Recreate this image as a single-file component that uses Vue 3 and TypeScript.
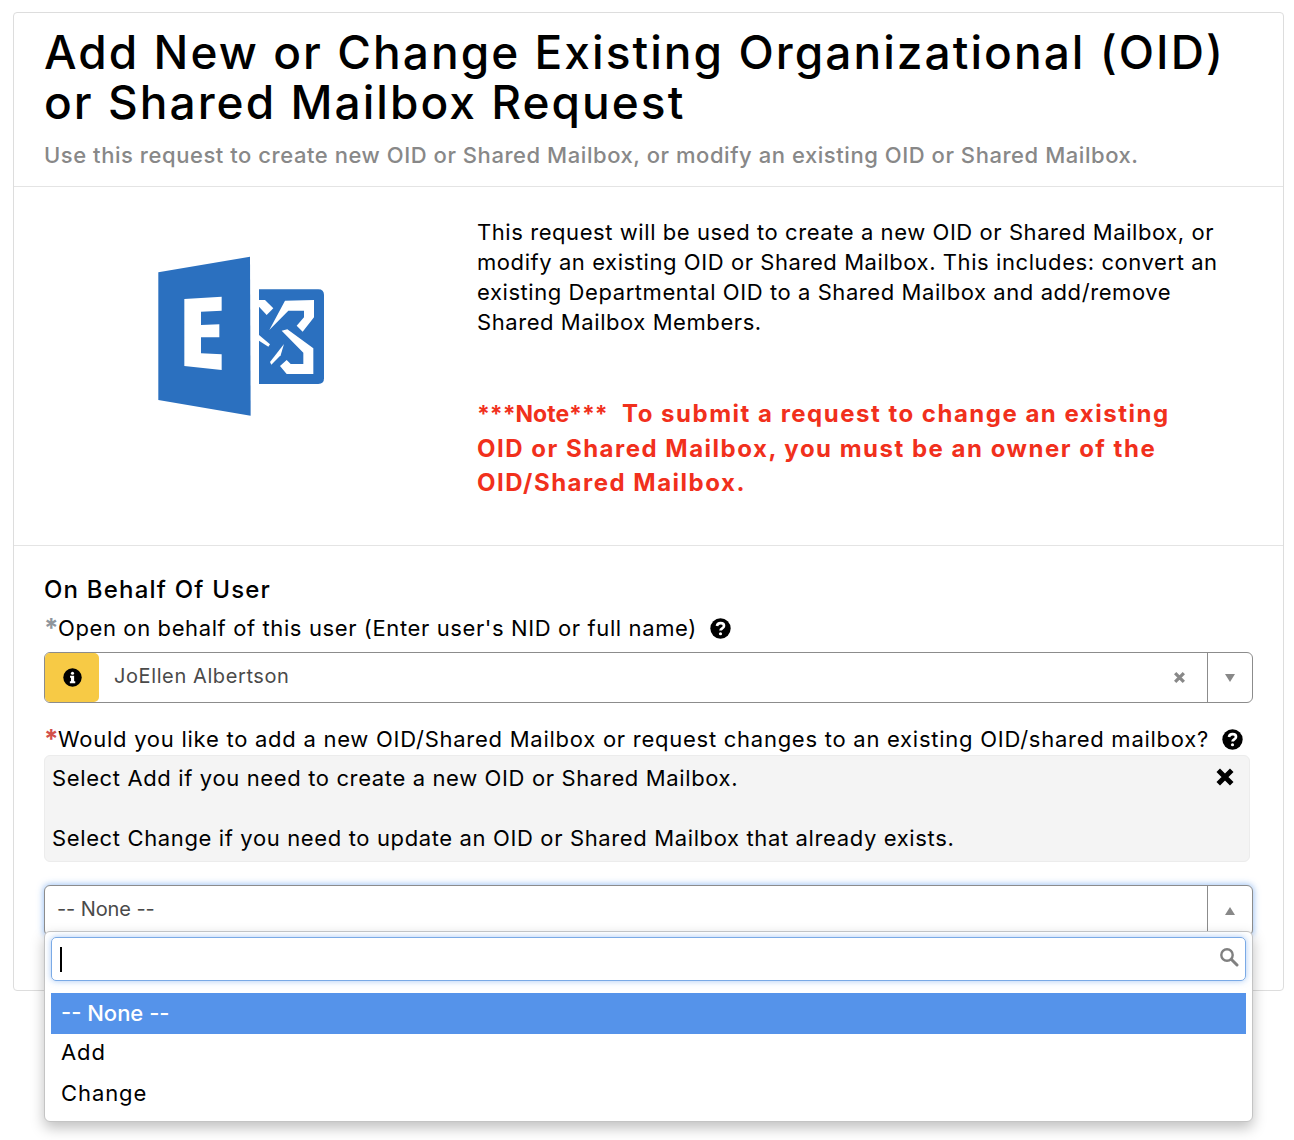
<script setup lang="ts">
const options = ['-- None --', 'Add', 'Change']
</script>

<template>
  <div class="page">
    <div class="card">
      <header class="card-head">
        <h1>Add New or Change Existing Organizational (OID) or Shared Mailbox Request</h1>
        <p class="sub">Use this request to create new OID or Shared Mailbox, or modify an existing OID or Shared Mailbox.</p>
      </header>

      <section class="intro">
        <div class="logo-col">
          <svg class="logo" viewBox="0 0 660 570" width="220" height="190">
            <path fill="#2b70bf" d="M85 97 360 50 362 527 85 480Z" />
            <path fill="#fff" d="M163 177 275 170V212L213 215V255L268 253V292H213V340L275 343V390L163 378Z" />
            <g transform="translate(360 120)">
              <path fill="#2b70bf" d="M27 28H205Q222 28 222 45V295Q222 312 205 312H27Z" />
              <path fill="#fff" d="M58 150 105 62 192 60V112L158 155 140 137 162 112V92H115Z" />
              <path fill="#fff" d="M95 152 112 148 190 205V282H110L90 258 110 240 122 252H160V218Z" />
              <path fill="#fff" d="M27 60H45L70 85 50 105 27 80Z" />
              <path fill="#fff" d="M27 165 60 193 55 200 27 182Z" />
              <path fill="#fff" d="M60 246 102 192 92 226 64 254Z" />
            </g>
          </svg>
        </div>
        <div class="intro-text">
          <p class="desc">This request will be used to create a new OID or Shared Mailbox, or modify an existing OID or Shared Mailbox. This includes: convert an existing Departmental OID to a Shared Mailbox and add/remove Shared Mailbox Members.</p>
          <p class="note"><span class="note-mark">***Note***</span>&nbsp; To submit a request to change an existing OID or Shared Mailbox, you must be an owner of the OID/Shared Mailbox.</p>
        </div>
      </section>

      <section class="form">
        <h2>On Behalf Of User</h2>
        <label class="field-label first">
          <span class="star grey">*</span>Open on behalf of this user (Enter user's NID or full name)
          <svg class="help" viewBox="0 0 512 512" width="21" height="21"><circle cx="256" cy="256" r="248" fill="#000" /><path fill="none" stroke="#fff" stroke-width="64" d="M170 195c6-45 42-70 88-70 48 0 84 28 84 68 0 58-86 58-86 112" /><circle cx="256" cy="385" r="38" fill="#fff" /></svg>
        </label>
        <div class="select user-select">
          <span class="addon">
            <svg viewBox="0 0 512 512" width="19" height="19"><circle cx="256" cy="256" r="248" fill="#000" /><circle cx="256" cy="140" r="42" fill="#fff" /><path fill="#fff" d="M190 210h110v150h30v50H185v-50h30v-100h-25z" /></svg>
          </span>
          <span class="value">JoEllen Albertson</span>
          <svg class="clear" viewBox="0 0 12 12" width="13" height="13"><path stroke="#888" stroke-width="3" d="M2 2 10 10M10 2 2 10" /></svg>
          <span class="arrow"><i class="tri down"></i></span>
        </div>

        <label class="field-label second">
          <span class="star red">*</span>Would you like to add a new OID/Shared Mailbox or request changes to an existing OID/shared mailbox?
          <svg class="help" viewBox="0 0 512 512" width="21" height="21"><circle cx="256" cy="256" r="248" fill="#000" /><path fill="none" stroke="#fff" stroke-width="64" d="M170 195c6-45 42-70 88-70 48 0 84 28 84 68 0 58-86 58-86 112" /><circle cx="256" cy="385" r="38" fill="#fff" /></svg>
        </label>
        <div class="hint">
          <p>Select Add if you need to create a new OID or Shared Mailbox.</p>
          <p>Select Change if you need to update an OID or Shared Mailbox that already exists.</p>
          <svg class="hint-close" viewBox="0 0 16 16" width="18" height="18"><path stroke="#000" stroke-width="4.4" d="M2 2 14 14M14 2 2 14" /></svg>
        </div>

        <div class="select-wrap">
          <div class="select open-select">
            <span class="value none">-- None --</span>
            <span class="arrow"><i class="tri up"></i></span>
          </div>
          <div class="dropdown">
            <div class="search">
              <i class="caret"></i>
              <svg viewBox="0 0 20 20" width="20" height="20"><circle cx="8" cy="8" r="5.7" fill="none" stroke="#808080" stroke-width="2.4" /><path stroke="#808080" stroke-width="3" stroke-linecap="round" d="M12.5 12.5 18 18" /></svg>
            </div>
            <ul>
              <li v-for="(o, i) in options" :key="o" :class="{ active: i === 0 }">{{ o }}</li>
            </ul>
          </div>
        </div>
      </section>
    </div>
  </div>
</template>

<style>
html, body { margin: 0; background: #fff; }
</style>

<style scoped>
.page {
  height: 1140px;
  padding: 12px 10px 0 13px;
  box-sizing: border-box;
  overflow: hidden;
  font-family: Inter, "Open Sans", sans-serif;
  color: #000;
}
.card {
  height: 979px;
  box-sizing: border-box;
  border: 1px solid #ddd;
  border-radius: 4px;
  background: #fff;
}
.card-head {
  height: 174px;
  box-sizing: border-box;
  padding: 14px 30px 0;
  border-bottom: 1px solid #e4e4e4;
}
h1 {
  margin: 0;
  font-size: 46px;
  line-height: 50px;
  font-weight: 500;
  letter-spacing: 2.05px;
}
.sub {
  margin: 13px 0 0;
  font-size: 22px;
  line-height: 30px;
  color: #888;
  font-weight: 500;
  letter-spacing: 0.55px;
}
.intro {
  display: flex;
  height: 359px;
  box-sizing: border-box;
  border-bottom: 1px solid #e4e4e4;
}
.logo-col { width: 463px; position: relative; }
.logo { margin: 53px 0 0 116px; display: block; }
.intro-text { padding: 30px 30px 0 0; flex: 1; }
.desc {
  margin: 0;
  font-size: 22px;
  line-height: 30px;
  letter-spacing: 0.57px;
}
.note {
  margin: 60px 0 0;
  max-width: 720px;
  font-size: 24px;
  line-height: 34.5px;
  font-weight: 700;
  letter-spacing: 1.5px;
  color: #f1301c;
}
.note-mark { font-size: 23px; letter-spacing: 0; }
.form { padding: 28px 30px 0; }
h2 {
  margin: 0;
  font-size: 24px;
  line-height: 32px;
  font-weight: 500;
  letter-spacing: 1.2px;
}
.field-label {
  display: flex;
  align-items: center;
  margin-top: 7px;
  font-size: 22px;
  line-height: 30px;
  white-space: nowrap;
}
.field-label.first { letter-spacing: 0.61px; }
.field-label.second { margin-top: 21px; letter-spacing: 0.74px; }
.star { font-size: 26px; width: 14px; height: 30px; font-weight: 700; align-self: flex-start; line-height: 30px; letter-spacing: 0; }
.star.grey { color: #8f959c; }
.star.red { color: #d2504a; }
.help { margin-left: 13px; flex: none; }
.select {
  display: flex;
  align-items: center;
  width: 1209px;
  height: 51px;
  box-sizing: border-box;
  border: 1px solid #8c8c8c;
  border-radius: 6px;
  background: #fff;
  margin-top: 9px;
}
.addon {
  width: 54px;
  align-self: stretch;
  background: #f7ca45;
  border-radius: 5px;
  display: flex;
  align-items: center;
  justify-content: center;
}
.value { flex: 1; padding: 0 0 3px 15px; font-size: 20px; color: #4a4a4a; letter-spacing: 0.6px; }
.value.none { padding-left: 12px; letter-spacing: -0.1px; }
.clear { margin-right: 21px; }
.arrow {
  width: 44px;
  align-self: stretch;
  border-left: 1px solid #8c8c8c;
  display: flex;
  align-items: center;
  justify-content: center;
}
.tri { width: 0; height: 0; border-left: 5px solid transparent; border-right: 5px solid transparent; }
.tri.down { border-top: 8px solid #888; }
.tri.up { border-bottom: 8px solid #888; }
.hint {
  position: relative;
  width: 1206px;
  height: 107px;
  box-sizing: border-box;
  margin-top: 1px;
  padding: 7px 7px;
  background: #f4f4f4;
  border: 1px solid #ececec;
  border-radius: 6px;
  font-size: 22px;
  line-height: 30px;
  letter-spacing: 0.63px;
}
.hint p { margin: 0 0 30px; }
.hint-close { position: absolute; top: 12px; right: 15px; }
.select-wrap { position: relative; margin-top: 23px; }
.open-select {
  margin-top: 0;
  box-shadow: 0 0 6px 1px rgba(82, 148, 235, 0.55);
}
.dropdown {
  position: absolute;
  z-index: 5;
  top: 46px;
  left: 0;
  width: 1209px;
  height: 191px;
  box-sizing: border-box;
  padding: 5px 6px;
  background: #fff;
  border: 1px solid #c4c4c4;
  border-radius: 6px;
  box-shadow: 0 6px 14px rgba(0, 0, 0, 0.25);
}
.search {
  height: 44px;
  box-sizing: border-box;
  display: flex;
  align-items: center;
  justify-content: space-between;
  padding: 0 6px 0 8px;
  border: 1px solid #7aaae6;
  border-radius: 5px;
  box-shadow: 0 0 6px rgba(82, 148, 235, 0.5);
}
.search svg { margin-top: -5px; }
.caret { width: 2px; height: 25px; background: #000; }
ul { list-style: none; margin: 12px 0 0; padding: 0; }
li {
  height: 41px;
  line-height: 37px;
  padding-left: 10px;
  font-size: 22px;
  letter-spacing: 0.9px;
}
li.active { line-height: 40px; background: #5593ea; color: #fff; font-weight: 500; letter-spacing: 0; }
</style>
